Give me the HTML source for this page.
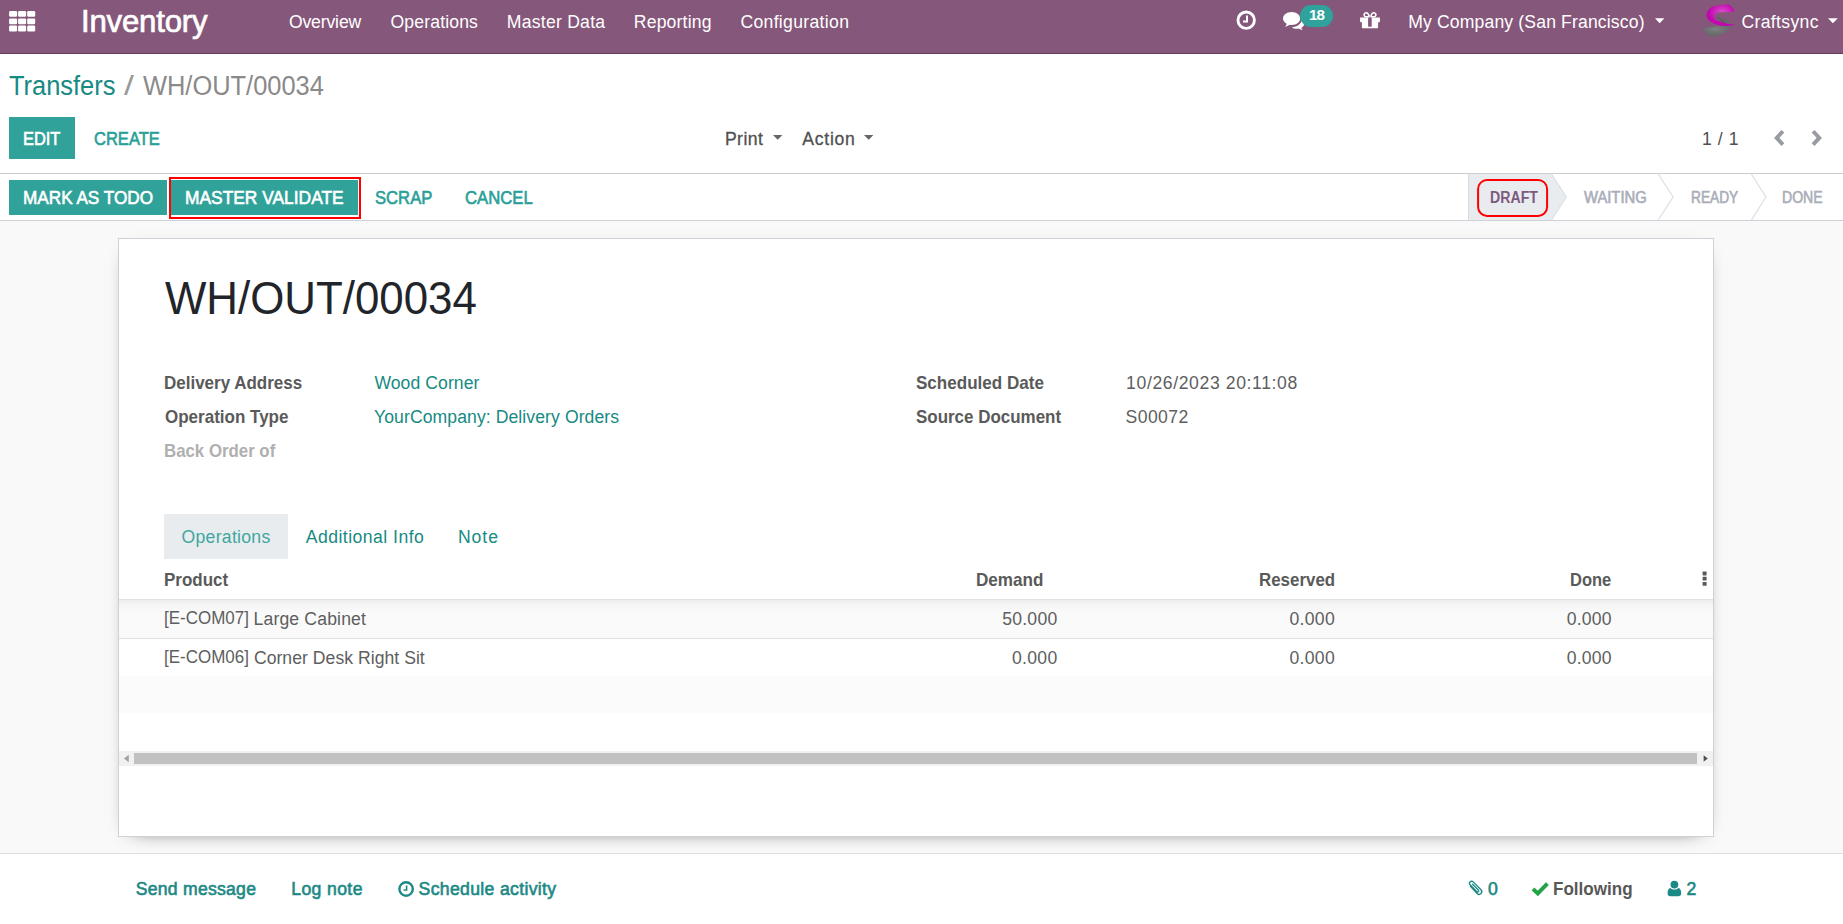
<!DOCTYPE html>
<html lang="en">
<head>
<meta charset="utf-8">
<title>WH/OUT/00034 - Odoo</title>
<style>
html,body{margin:0;padding:0;}
body{width:1843px;height:924px;overflow:hidden;background:#fff;font-family:"Liberation Sans",sans-serif;position:relative;}
.t{position:absolute;white-space:pre;line-height:1;font-weight:400;transform-origin:0 0;}
.abs{position:absolute;}
svg{position:absolute;overflow:visible;}
#navbar{position:absolute;left:0;top:0;width:1843px;height:53px;background:#85577a;border-bottom:1px solid #623b5a;}
#cp{position:absolute;left:0;top:54px;width:1843px;height:119px;background:#fff;border-bottom:1px solid #cdcdcd;}
#statusbar{position:absolute;left:0;top:174px;width:1843px;height:46px;background:#fff;border-bottom:1px solid #ced2d8;}
#content{position:absolute;left:0;top:221px;width:1843px;height:632px;background:#f9f9f9;}
#sheet{position:absolute;left:118px;top:238px;width:1594px;height:597px;background:#fff;border:1px solid #cdd1d8;box-shadow:0 5px 20px -15px #000;}
#chatter{position:absolute;left:0;top:853px;width:1843px;height:70px;background:#fff;border-top:1px solid #dcdfe3;}
.btn{position:absolute;background:#30a29a;}
</style>
</head>
<body>
<!-- ======= NAVBAR ======= -->
<div id="navbar"></div>
<svg id="ic-apps" style="left:9px;top:10.8px" width="27" height="21" viewBox="0 0 27 21" fill="#fff">
 <rect x="0.1" y="0" width="8" height="5.8" rx="1.2"/><rect x="9.1" y="0" width="8" height="5.8" rx="1.2"/><rect x="18.2" y="0" width="8" height="5.8" rx="1.2"/>
 <rect x="0.1" y="7.4" width="8" height="5.8" rx="1.2"/><rect x="9.1" y="7.4" width="8" height="5.8" rx="1.2"/><rect x="18.2" y="7.4" width="8" height="5.8" rx="1.2"/>
 <rect x="0.1" y="14.6" width="8" height="5.8" rx="1.2"/><rect x="9.1" y="14.6" width="8" height="5.8" rx="1.2"/><rect x="18.2" y="14.6" width="8" height="5.8" rx="1.2"/>
</svg>
<span class="t" style="left:80.98px;top:5.98px;font-size:31.2px;letter-spacing:-0.214px;color:#fff;-webkit-text-stroke:0.7px #fff;">Inventory</span>
<span class="t" style="left:288.89px;top:13.54px;font-size:17.6px;letter-spacing:-0.138px;color:#fff;">Overview</span><span class="t" style="left:390.49px;top:13.54px;font-size:17.6px;letter-spacing:0.151px;color:#fff;">Operations</span><span class="t" style="left:506.83px;top:13.54px;font-size:17.6px;letter-spacing:0.241px;color:#fff;">Master Data</span><span class="t" style="left:633.83px;top:13.54px;font-size:17.6px;letter-spacing:0.173px;color:#fff;">Reporting</span><span class="t" style="left:740.41px;top:13.54px;font-size:17.6px;letter-spacing:0.322px;color:#fff;">Configuration</span>
<!-- clock -->
<svg id="ic-clock" style="left:1236px;top:10px" width="21" height="21" viewBox="0 0 21 21">
 <circle cx="10.2" cy="10.15" r="8.2" fill="none" stroke="#fff" stroke-width="2.9"/>
 <path d="M11 5.4 V11.6 H7" fill="none" stroke="#fff" stroke-width="2"/>
</svg>
<!-- comments -->
<svg id="ic-comments" style="left:1283px;top:12px" width="22" height="19" viewBox="0 0 22 19" fill="#fff">
 <path d="M17.2 6.5 C17.2 10.1 13.4 13 8.6 13 C7.9 13 7.2 12.9 6.5 12.8 C5.2 13.9 3.6 14.6 1.9 14.8 C2.9 13.9 3.5 12.9 3.7 11.7 C1.5 10.5 0 8.6 0 6.5 C0 2.9 3.9 0 8.6 0 C13.4 0 17.2 2.9 17.2 6.5 Z"/>
 <path d="M18.6 7.2 C20.3 8.3 21.3 9.9 21.3 11.6 C21.3 13.4 20.1 15 18.3 16.1 C18.5 16.9 19 17.6 19.8 18.1 C18.2 18 16.8 17.4 15.7 16.6 C15.1 16.7 14.5 16.8 13.9 16.8 C11.9 16.8 10.1 16.2 8.8 15.2 C14.5 15.1 18.9 11.4 18.6 7.2 Z"/>
</svg>
<div class="abs" style="left:1300.2px;top:5.1px;width:32.8px;height:21.8px;border-radius:11px;background:#2fa39b;"></div>
<span class="t" style="left:1309.08px;top:7.18px;font-size:15.2px;letter-spacing:-0.953px;color:#fff;font-weight:700;">18</span>
<!-- gift -->
<svg id="ic-gift" style="left:1360px;top:10.5px" width="20" height="18" viewBox="0 0 20 18" fill="#fff">
 <path fill-rule="evenodd" d="M0.1 6.5 H19.9 V10.6 C19.9 11 19.6 11.2 19.2 11.2 H18.1 V16.2 C18.1 16.8 17.7 17.2 17.1 17.2 H2.9 C2.3 17.2 1.9 16.8 1.9 16.2 V11.2 H0.8 C0.4 11.2 0.1 11 0.1 10.6 Z M8.1 6.5 V14.9 C8.1 15.4 8.5 15.8 9 15.8 H10.8 C11.3 15.8 11.7 15.4 11.7 14.9 V6.5 Z"/>
 <path fill-rule="evenodd" d="M9.6 6.6 H6.2 C4.4 6.6 3.3 5.3 3.3 3.8 C3.3 2.3 4.5 0.9 6.2 0.9 C8 0.9 9 2.6 9.9 4.6 Z M8.3 5.1 C7.8 3.8 7.2 2.5 6.2 2.5 C5.5 2.5 4.9 3.1 4.9 3.8 C4.9 4.5 5.4 5.1 6.2 5.1 Z"/>
 <path fill-rule="evenodd" d="M10.4 6.6 H13.8 C15.6 6.6 16.7 5.3 16.7 3.8 C16.7 2.3 15.5 0.9 13.8 0.9 C12 0.9 11 2.6 10.1 4.6 Z M11.7 5.1 C12.2 3.8 12.8 2.5 13.8 2.5 C14.5 2.5 15.1 3.1 15.1 3.8 C15.1 4.5 14.6 5.1 13.8 5.1 Z"/>
</svg>
<span class="t" style="left:1408.23px;top:13.54px;font-size:17.6px;letter-spacing:0.144px;color:#fff;">My Company (San Francisco)</span>
<svg style="left:1655px;top:18px" width="10" height="6" viewBox="0 0 10 6"><path d="M0 0.2 H9.4 L4.7 5.2 Z" fill="#fff"/></svg>
<!-- avatar logo -->
<svg id="logo" style="left:1698px;top:0px" width="44" height="42" viewBox="0 0 44 42">
 <defs>
  <radialGradient id="lg1" cx="0.55" cy="0.38" r="0.45"><stop offset="0" stop-color="#dc52cd"/><stop offset="1" stop-color="#c108b0"/></radialGradient>
  <radialGradient id="lg2" cx="0.45" cy="0.35" r="0.5"><stop offset="0" stop-color="#7d817f"/><stop offset="1" stop-color="#68696b"/></radialGradient>
 </defs>
 <path d="M5 29.5 C6.5 28.4 7.8 27.9 9.1 27.6 C12 27 15 26.6 18.2 26.3 L25 25.8 L32.7 25.6 L33.6 25.2 C33.2 26.8 32.3 28.2 30.9 29.6 C29.4 31.2 27.6 32.5 25.5 33.6 C23.2 34.8 20.8 35.5 18.2 36 C16.3 36.4 14.5 36.6 12.7 36.4 C10.8 35.9 9.4 34.9 8.2 33.6 C6.9 32.3 5.9 31 5 29.5 Z" fill="url(#lg2)"/>
 <path d="M19.1 16.9 C21.3 17.1 23.5 17.5 25.5 18.2 C27.2 18.7 28.7 19.3 30 20.2 C31.4 21.1 32.4 22.2 33.2 23.6 L26.8 22.9 Z" fill="#66686a"/>
 <path d="M19 16.8 L27.2 22.7 L26.4 23.1 L19 17.3 Z" fill="#4a484c"/>
 <path d="M14.1 6.8 C18 5.6 24 4.8 29.1 4.5 L31.4 4.8 C33.6 6.5 35.6 8.8 36.8 11.1 C35.6 11.9 34.4 12.1 33 12.1 L21.4 12.3 C20 12.5 18.9 12.9 18.2 13.7 C17.2 14.7 16.5 15.7 16.4 16.8 C16.3 18 16.6 18.9 17.3 19.5 C18.2 20.2 19.3 20.6 20.5 20.9 L25.5 22.7 C27.6 23.3 29.7 23.8 31.8 24 L36.8 24.3 C35.2 25.2 33.6 25.6 31.8 25.8 C29.7 26 27.6 26 25.5 25.9 C23 25.7 20.6 25.3 18.2 24.5 C16.1 23.9 14.3 23 12.7 21.8 C11.2 20.8 10 19.6 9.1 18.2 C8.5 17.1 8.3 15.8 8.4 14.5 C8.5 13.1 9 11.7 9.8 10.5 C10.9 9 12.3 7.8 14.1 6.8 Z" fill="url(#lg1)"/>
</svg>
<span class="t" style="left:1741.51px;top:13.54px;font-size:17.6px;letter-spacing:0.339px;color:#fff;">Craftsync</span>
<svg style="left:1828px;top:18px" width="10" height="6" viewBox="0 0 10 6"><path d="M0 0.2 H9.8 L4.9 5.3 Z" fill="#fff"/></svg>

<!-- ======= CONTROL PANEL ======= -->
<div id="cp"></div>
<span class="t" style="left:9.39px;top:72.62px;font-size:26.8px;letter-spacing:0.000px;color:#168a83;transform:scaleX(0.9488);">Transfers</span><span class="t" style="left:124.25px;top:72.62px;font-size:26.8px;letter-spacing:0.000px;color:#999;transform:scaleX(1.3264);">/</span><span class="t" style="left:142.68px;top:72.62px;font-size:26.8px;letter-spacing:0.000px;color:#8a8a8a;transform:scaleX(0.9490);">WH/OUT/00034</span>
<div class="btn" style="left:9px;top:117px;width:66px;height:42px;"></div>
<span class="t" style="left:23.40px;top:130.78px;font-size:17.9px;letter-spacing:0.000px;color:#fff;-webkit-text-stroke:0.6px #fff;transform:scaleX(0.9169);">EDIT</span><span class="t" style="left:94.42px;top:130.78px;font-size:17.9px;letter-spacing:0.000px;color:#2a9f97;-webkit-text-stroke:0.6px #2a9f97;transform:scaleX(0.9236);">CREATE</span>
<span class="t" style="left:724.88px;top:131.04px;font-size:17.6px;letter-spacing:0.459px;color:#505050;-webkit-text-stroke:0.3px #505050;">Print</span>
<svg style="left:772.5px;top:135px" width="10" height="6" viewBox="0 0 10 6"><path d="M0 0 H9.4 L4.7 4.8 Z" fill="#666"/></svg>
<span class="t" style="left:802.32px;top:131.04px;font-size:17.6px;letter-spacing:0.727px;color:#505050;-webkit-text-stroke:0.3px #505050;">Action</span>
<svg style="left:864.4px;top:135px" width="10" height="6" viewBox="0 0 10 6"><path d="M0 0 H9.4 L4.7 4.8 Z" fill="#666"/></svg>
<span class="t" style="left:1702.01px;top:131.04px;font-size:17.6px;letter-spacing:0.575px;color:#505050;">1 / 1</span>
<svg style="left:1773px;top:129px" width="14" height="18" viewBox="0 0 14 18"><path d="M9.9 2.2 L3.7 8.9 L9.9 15.6" fill="none" stroke="#989ba1" stroke-width="3.9"/></svg>
<svg style="left:1810px;top:129px" width="14" height="18" viewBox="0 0 14 18"><path d="M3.1 2.2 L9.3 8.9 L3.1 15.6" fill="none" stroke="#989ba1" stroke-width="3.9"/></svg>

<!-- ======= STATUS BAR ======= -->
<div id="statusbar"></div>
<div class="btn" style="left:9px;top:180px;width:158px;height:35px;"></div>
<div class="abs" style="left:169px;top:177px;width:188px;height:38px;border:2px solid #f00;"></div>
<div class="btn" style="left:171px;top:180px;width:186.5px;height:35px;"></div>
<span class="t" style="left:23.39px;top:189.78px;font-size:17.9px;letter-spacing:0.000px;color:#fff;-webkit-text-stroke:0.6px #fff;transform:scaleX(0.9592);">MARK AS TODO</span><span class="t" style="left:184.98px;top:189.78px;font-size:17.9px;letter-spacing:0.000px;color:#fff;-webkit-text-stroke:0.6px #fff;transform:scaleX(0.9710);">MASTER VALIDATE</span><span class="t" style="left:375.42px;top:189.78px;font-size:17.9px;letter-spacing:0.000px;color:#2a9f97;-webkit-text-stroke:0.6px #2a9f97;transform:scaleX(0.9299);">SCRAP</span><span class="t" style="left:465.01px;top:189.78px;font-size:17.9px;letter-spacing:0.000px;color:#2a9f97;-webkit-text-stroke:0.6px #2a9f97;transform:scaleX(0.9330);">CANCEL</span>
<svg style="left:1460px;top:174px" width="383" height="46" viewBox="0 0 383 46">
 <path d="M8 0 H91.5 L106.3 23 L91.5 46 H8 Z" fill="#e9ecef"/>
 <path d="M8.5 0 V46" stroke="#d9dce1" stroke-width="1" fill="none"/>
 <path d="M91.5 0 L106.3 23 L91.5 46" stroke="#dde0e5" stroke-width="1.3" fill="none"/>
 <path d="M198.2 0 L213.1 23 L198.2 46" stroke="#dde0e5" stroke-width="1.3" fill="none"/>
 <path d="M291.4 0 L305.9 23 L291.4 46" stroke="#dde0e5" stroke-width="1.3" fill="none"/>
 <rect x="18.1" y="6" width="69" height="35.9" rx="9" ry="9" fill="none" stroke="#f00" stroke-width="2"/>
</svg>
<span class="t" style="left:1490.48px;top:190.07px;font-size:15.8px;letter-spacing:0.000px;color:#7c5a80;font-weight:700;transform:scaleX(0.8950);">DRAFT</span><span class="t" style="left:1583.60px;top:190.07px;font-size:15.8px;letter-spacing:0.000px;color:#a9adb9;-webkit-text-stroke:0.6px #a9adb9;transform:scaleX(0.9353);">WAITING</span><span class="t" style="left:1690.51px;top:190.07px;font-size:15.8px;letter-spacing:0.000px;color:#a9adb9;-webkit-text-stroke:0.6px #a9adb9;transform:scaleX(0.8683);">READY</span><span class="t" style="left:1782.09px;top:190.07px;font-size:15.8px;letter-spacing:0.000px;color:#a9adb9;-webkit-text-stroke:0.6px #a9adb9;transform:scaleX(0.8906);">DONE</span>

<!-- ======= CONTENT ======= -->
<div id="content"></div>
<div id="chatter"></div>
<div id="sheet"></div>
<span class="t" style="left:165.02px;top:275.20px;font-size:46px;letter-spacing:0.000px;color:#212529;transform:scaleX(0.9529);">WH/OUT/00034</span>
<span class="t" style="left:164.18px;top:374.79px;font-size:17.9px;letter-spacing:0.000px;color:#5a5a5a;font-weight:700;transform:scaleX(0.9491);">Delivery Address</span><span class="t" style="left:374.41px;top:375.04px;font-size:17.6px;letter-spacing:0.073px;color:#168a83;">Wood Corner</span><span class="t" style="left:164.69px;top:408.79px;font-size:17.9px;letter-spacing:0.000px;color:#5a5a5a;font-weight:700;transform:scaleX(0.9502);">Operation Type</span><span class="t" style="left:374.01px;top:409.04px;font-size:17.6px;letter-spacing:0.084px;color:#168a83;">YourCompany: Delivery Orders</span><span class="t" style="left:164.18px;top:442.79px;font-size:17.9px;letter-spacing:0.000px;color:#b0b0b0;font-weight:700;transform:scaleX(0.9402);">Back Order of</span><span class="t" style="left:916.43px;top:374.79px;font-size:17.9px;letter-spacing:0.000px;color:#5a5a5a;font-weight:700;transform:scaleX(0.9531);">Scheduled Date</span><span class="t" style="left:1126.11px;top:375.04px;font-size:17.6px;letter-spacing:0.611px;color:#5e5e5e;">10/26/2023 20:11:08</span><span class="t" style="left:916.43px;top:408.79px;font-size:17.9px;letter-spacing:0.000px;color:#5a5a5a;font-weight:700;transform:scaleX(0.9478);">Source Document</span><span class="t" style="left:1125.53px;top:409.04px;font-size:17.6px;letter-spacing:0.422px;color:#5e5e5e;">S00072</span>
<div class="abs" style="left:164px;top:514px;width:124px;height:45px;background:#e9ecef;"></div>
<span class="t" style="left:181.59px;top:529.34px;font-size:17.6px;letter-spacing:0.288px;color:#3fa7a0;">Operations</span><span class="t" style="left:305.71px;top:529.34px;font-size:17.6px;letter-spacing:0.469px;color:#168a83;">Additional Info</span><span class="t" style="left:457.93px;top:529.34px;font-size:17.6px;letter-spacing:0.980px;color:#168a83;">Note</span>
<span class="t" style="left:163.98px;top:571.78px;font-size:17.9px;letter-spacing:0.000px;color:#5a5a5a;font-weight:700;transform:scaleX(0.9501);">Product</span><span class="t" style="left:975.86px;top:571.78px;font-size:17.9px;letter-spacing:0.000px;color:#5a5a5a;font-weight:700;transform:scaleX(0.9549);">Demand</span><span class="t" style="left:1258.98px;top:571.78px;font-size:17.9px;letter-spacing:0.000px;color:#5a5a5a;font-weight:700;transform:scaleX(0.9455);">Reserved</span><span class="t" style="left:1570.09px;top:571.78px;font-size:17.9px;letter-spacing:0.000px;color:#5a5a5a;font-weight:700;transform:scaleX(0.9218);">Done</span>
<svg style="left:1701px;top:571px" width="8" height="16" viewBox="0 0 8 16" fill="#5a5a5a"><rect x="1.6" y="0.6" width="4" height="3.8" rx="0.6"/><rect x="1.6" y="5.8" width="4" height="3.8" rx="0.6"/><rect x="1.6" y="11" width="4" height="3.8" rx="0.6"/></svg>
<div class="abs" style="left:119px;top:599px;width:1594px;height:39px;background:linear-gradient(#dfe2e6 0,#dfe2e6 1px,#ededed 1px,#f5f5f5 6px,#fafafa 14px,#fafafa 100%);"></div>
<div class="abs" style="left:119px;top:638px;width:1594px;height:1px;background:#dde1e6;"></div>
<div class="abs" style="left:119px;top:676px;width:1594px;height:36.5px;background:#fbfbfb;"></div>
<span class="t" style="left:164.11px;top:610.28px;font-size:17.9px;letter-spacing:0.000px;color:#5e5e5e;transform:scaleX(0.9487);">[E-COM07] </span><span class="t" style="left:253.53px;top:610.54px;font-size:17.6px;letter-spacing:0.157px;color:#5e5e5e;">Large Cabinet</span><span class="t" style="left:1002.17px;top:610.54px;font-size:17.6px;letter-spacing:0.245px;color:#5e5e5e;">50.000</span><span class="t" style="left:1289.39px;top:610.54px;font-size:17.6px;letter-spacing:0.330px;color:#5e5e5e;">0.000</span><span class="t" style="left:1566.69px;top:610.54px;font-size:17.6px;letter-spacing:0.196px;color:#5e5e5e;">0.000</span>
<span class="t" style="left:164.11px;top:649.28px;font-size:17.9px;letter-spacing:0.000px;color:#5e5e5e;transform:scaleX(0.9487);">[E-COM06] </span><span class="t" style="left:253.91px;top:649.54px;font-size:17.6px;letter-spacing:0.035px;color:#5e5e5e;">Corner Desk Right Sit</span><span class="t" style="left:1011.89px;top:649.54px;font-size:17.6px;letter-spacing:0.328px;color:#5e5e5e;">0.000</span><span class="t" style="left:1289.39px;top:649.54px;font-size:17.6px;letter-spacing:0.330px;color:#5e5e5e;">0.000</span><span class="t" style="left:1566.69px;top:649.54px;font-size:17.6px;letter-spacing:0.196px;color:#5e5e5e;">0.000</span>
<!-- horizontal scrollbar -->
<div class="abs" style="left:119px;top:751px;width:1594px;height:15px;background:#f1f1f1;"></div>
<div class="abs" style="left:134px;top:753px;width:1563px;height:11.2px;background:#c1c1c1;"></div>
<svg style="left:123px;top:754px" width="7" height="9" viewBox="0 0 7 9"><path d="M5.8 0.8 V8.2 L0.9 4.5 Z" fill="#a3a3a3"/></svg>
<svg style="left:1702px;top:754px" width="7" height="9" viewBox="0 0 7 9"><path d="M1.6 1.2 V7.8 L5.8 4.5 Z" fill="#505050"/></svg>

<!-- ======= CHATTER ======= -->
<span class="t" style="left:135.79px;top:881.34px;font-size:17.6px;letter-spacing:0.253px;color:#1b8985;-webkit-text-stroke:0.6px #1b8985;">Send message</span><span class="t" style="left:291.29px;top:881.34px;font-size:17.6px;letter-spacing:0.378px;color:#1b8985;-webkit-text-stroke:0.6px #1b8985;">Log note</span>
<svg style="left:398px;top:881px" width="17" height="17" viewBox="0 0 17 17"><circle cx="8.1" cy="8" r="6.7" fill="none" stroke="#1b8985" stroke-width="2.4"/><path d="M8.6 4.4 V9 H5.6" fill="none" stroke="#1b8985" stroke-width="1.6"/></svg>
<span class="t" style="left:418.59px;top:881.34px;font-size:17.6px;letter-spacing:0.340px;color:#1b8985;-webkit-text-stroke:0.6px #1b8985;">Schedule activity</span>
<svg style="left:1466px;top:880px" width="18" height="18" viewBox="0 0 18 18"><path d="M4.4 6.2 L11 13.4 C12.2 14.6 14 14.6 15 13.6 C16.1 12.5 16 10.9 15 9.8 L7.2 1.9 C6.3 1 4.9 1 4.1 1.8 C3.2 2.7 3.3 3.9 4.1 4.8 L10.8 11.6 C11.3 12.1 12 12.1 12.4 11.7 C12.9 11.2 12.8 10.6 12.4 10.1 L6.6 4.2" fill="none" stroke="#1b8985" stroke-width="1.35" stroke-linecap="round"/></svg>
<span class="t" style="left:1487.88px;top:881.34px;font-size:17.6px;letter-spacing:0.000px;color:#1b8985;-webkit-text-stroke:0.6px #1b8985;">0</span>
<svg style="left:1531px;top:880px" width="19" height="16" viewBox="0 0 19 16"><path d="M2 8.8 L6.8 13.4 L16.4 3.6" fill="none" stroke="#22a347" stroke-width="3.9"/></svg>
<span class="t" style="left:1553.46px;top:881.08px;font-size:17.9px;letter-spacing:0.000px;color:#585858;font-weight:700;transform:scaleX(0.9544);">Following</span>
<svg style="left:1667px;top:880px" width="15" height="17" viewBox="0 0 15 17" fill="#1b8985"><circle cx="7.4" cy="4.6" r="3.9"/><path d="M3.4 8 C1.4 8.4 0.6 10.4 0.6 13.4 C0.6 15.2 1.8 16.2 3.4 16.2 H11.4 C13 16.2 14.2 15.2 14.2 13.4 C14.2 10.4 13.4 8.4 11.4 8 C10.4 9 9 9.6 7.4 9.6 C5.8 9.6 4.4 9 3.4 8 Z"/></svg>
<span class="t" style="left:1686.53px;top:881.34px;font-size:17.6px;letter-spacing:0.000px;color:#1b8985;-webkit-text-stroke:0.6px #1b8985;">2</span>
</body>
</html>
